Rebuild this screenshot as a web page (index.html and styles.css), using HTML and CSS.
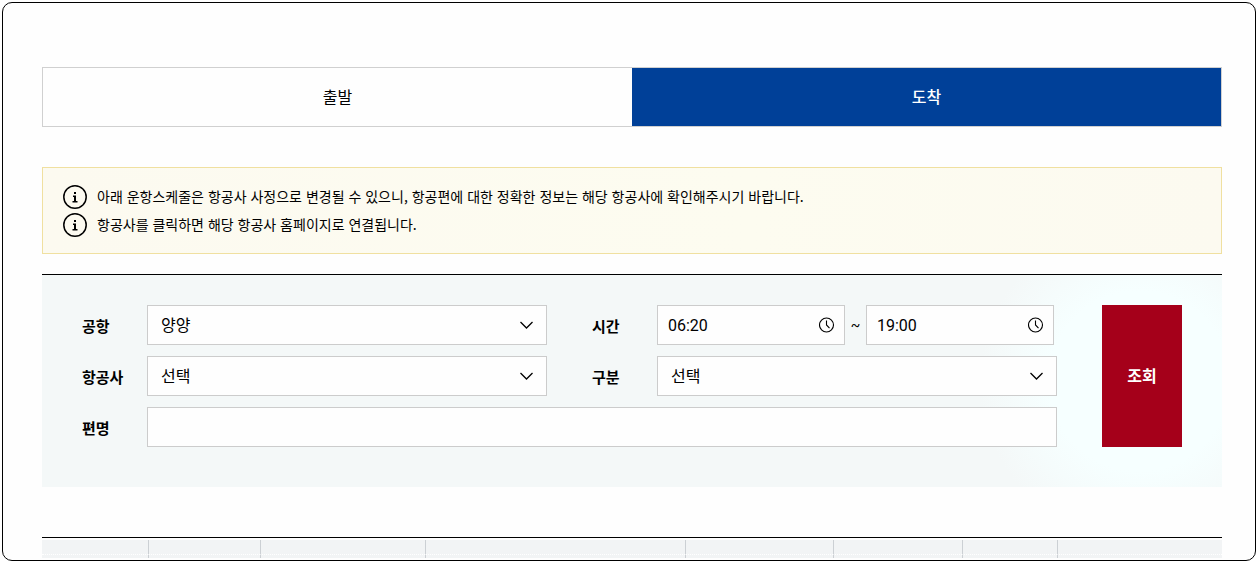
FILE: index.html
```html
<!DOCTYPE html>
<html lang="ko">
<head>
    <meta charset="UTF-8">
    <meta name="viewport" content="width=device-width, initial-scale=1.0">
    <title>운항스케줄</title>
    <link rel="stylesheet" href="styles.css">
</head>
<body>
    <main class="container">
        <div class="tabs">
            <button type="button" class="tab">출발</button>
            <button type="button" class="tab active">도착</button>
        </div>

        <ul class="notice">
            <li>
                <svg class="info" viewBox="0 0 24 24" aria-hidden="true">
                    <circle cx="12" cy="12" r="11.2"/>
                    <path d="M11 7h2v2h-2zM10 10.5h3V16h1.5v1.5h-5V16H11v-4h-1z"/>
                </svg>
                <span>아래 운항스케줄은 항공사 사정으로 변경될 수 있으니, 항공편에 대한 정확한 정보는 해당 항공사에 확인해주시기 바랍니다.</span>
            </li>
            <li>
                <svg class="info" viewBox="0 0 24 24" aria-hidden="true">
                    <circle cx="12" cy="12" r="11.2"/>
                    <path d="M11 7h2v2h-2zM10 10.5h3V16h1.5v1.5h-5V16H11v-4h-1z"/>
                </svg>
                <span>항공사를 클릭하면 해당 항공사 홈페이지로 연결됩니다.</span>
            </li>
        </ul>

        <form class="search">
            <div class="fields">
                <label for="airport">공항</label>
                <div class="field">
                    <select id="airport">
                        <option>양양</option>
                    </select>
                    <svg class="arrow" viewBox="0 0 14 8" aria-hidden="true"><path d="M.5 1l6 6 6-6"/></svg>
                </div>

                <label for="startTime" class="second">시간</label>
                <div class="times">
                    <div class="field">
                        <input type="text" id="startTime" value="06:20">
                        <svg class="clock" viewBox="0 0 16 16" aria-hidden="true"><circle cx="7.5" cy="8" r="7"/><path d="M7.5 3.5V8l3 3.2"/></svg>
                    </div>
                    <span class="tilde">~</span>
                    <div class="field">
                        <input type="text" id="endTime" value="19:00" aria-label="종료 시간">
                        <svg class="clock" viewBox="0 0 16 16" aria-hidden="true"><circle cx="7.5" cy="8" r="7"/><path d="M7.5 3.5V8l3 3.2"/></svg>
                    </div>
                </div>

                <label for="airline">항공사</label>
                <div class="field">
                    <select id="airline">
                        <option>선택</option>
                    </select>
                    <svg class="arrow" viewBox="0 0 14 8" aria-hidden="true"><path d="M.5 1l6 6 6-6"/></svg>
                </div>

                <label for="type" class="second">구분</label>
                <div class="field">
                    <select id="type">
                        <option>선택</option>
                    </select>
                    <svg class="arrow" viewBox="0 0 14 8" aria-hidden="true"><path d="M.5 1l6 6 6-6"/></svg>
                </div>

                <label for="flight">편명</label>
                <div class="field wide">
                    <input type="text" id="flight">
                </div>
            </div>
            <button type="button" class="submit">조회</button>
        </form>

        <div class="schedule">
            <table>
                <colgroup>
                    <col class="c1"><col class="c2"><col class="c3"><col class="c4">
                    <col class="c5"><col class="c6"><col class="c7"><col class="c8">
                </colgroup>
                <thead>
                    <tr><th></th><th></th><th></th><th></th><th></th><th></th><th></th><th></th></tr>
                </thead>
                <tbody>
                    <tr><td></td><td></td><td></td><td></td><td></td><td></td><td></td><td></td></tr>
                </tbody>
            </table>
        </div>
    </main>
</body>
</html>
```
FILE: styles.css
```css
* {
    box-sizing: border-box;
}
body {
    margin: 2px;
    background: #fff;
    color: #000;
    font-family: "Noto Sans CJK KR", sans-serif;
    font-size: 16px;
}
button, input, select {
    font: inherit;
    color: inherit;
}
.container {
    min-height: calc(100vh - 4px);
    padding: 64px 33px 2px 39px;
    border: 1px solid #000;
    border-radius: 10px;
    background: #fefefe;
}

/* tabs */
.tabs {
    display: flex;
    height: 60px;
    border: 1px solid #d0d0d0;
}
.tab {
    flex: 1;
    padding: 0 0 3px;
    border: none;
    background: #fefefe;
    cursor: pointer;
}
.tab.active {
    background: #004098;
    color: #fff;
    font-weight: 500;
}

/* notice */
.notice {
    margin: 40px 0 20px;
    padding: 15px 20px 14px;
    border: 1px solid #f0e0a0;
    background: linear-gradient(to right, #fcfaf0, #fdfcf0 60%, #fcfaf0);
    list-style: none;
    font-size: 14px;
}
.notice li {
    display: flex;
    align-items: center;
    gap: 10px;
    height: 28px;
}
.notice span {
    padding-bottom: 3px;
}
.info {
    flex: none;
    width: 24px;
    height: 24px;
}
.info circle {
    fill: none;
    stroke: #000;
    stroke-width: 1.5;
}

/* search form */
.search {
    display: flex;
    gap: 45px;
    padding: 30px 40px 40px;
    border-top: 1px solid #000;
    background: radial-gradient(circle at 93% 50%, #f6ffff 90px, #f4f8f8 160px);
}
.fields {
    flex: 1;
    display: grid;
    grid-template-columns: 65px 1fr 110px 1fr;
    gap: 11px 0;
}
.fields label {
    font-size: 15px;
    font-weight: bold;
    line-height: 42px;
    height: 40px;
}
.fields .second {
    padding-left: 45px;
}
.field {
    position: relative;
    height: 40px;
}
.field.wide {
    grid-column: 2 / 5;
}
.field input, .field select {
    display: block;
    width: 100%;
    height: 40px;
    padding: 0 13px 2px;
    border: 1px solid #ccc;
    border-radius: 0;
    background: #fefefe;
    appearance: none;
}
.times {
    display: flex;
    padding-right: 3px;
}
.times .field {
    flex: 1;
}
.times input {
    padding: 0 10px;
    font-family: Roboto, sans-serif;
}
.tilde {
    width: 21px;
    line-height: 40px;
    text-align: center;
    font-size: 14px;
    font-family: Roboto, sans-serif;
}
.arrow, .clock {
    position: absolute;
    fill: none;
    stroke: #000;
    pointer-events: none;
}
.arrow {
    top: 16px;
    right: 13px;
    width: 14px;
    height: 8px;
    stroke-width: 1.3;
}
.clock {
    top: 12px;
    right: 10px;
    width: 16px;
    height: 16px;
    stroke-width: 1.1;
}
.submit {
    width: 80px;
    padding: 0 0 3px;
    border: none;
    background: #a5001a;
    color: #fff;
    font-weight: bold;
    cursor: pointer;
}

/* schedule table */
.schedule {
    margin-top: 50px;
    padding-top: 2px;
    border-top: 1px solid #000;
}
table {
    width: 100%;
    table-layout: fixed;
    border-collapse: separate;
    border-spacing: 0;
    background: #f2f4f5;
}
th, td {
    padding: 0;
    border-left: 1px solid #ccd0d4;
}
th {
    height: 15px;
    border-bottom: 1px dotted #fff;
}
td {
    height: 3px;
}
th:first-child, td:first-child {
    border-left: none;
}
.c1 { width: 9%; }
.c2 { width: 9.5%; }
.c3 { width: 14%; }
.c4 { width: 22%; }
.c5 { width: 12.5%; }
.c6 { width: 11%; }
.c7 { width: 8%; }
.c8 { width: 14%; }
```
